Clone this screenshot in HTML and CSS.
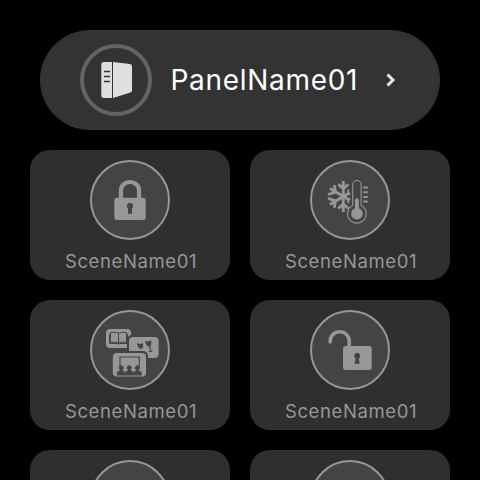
FILE: index.html
```html
<!DOCTYPE html>
<html lang="en">
<head>
<meta charset="utf-8">
<title>Scenes</title>
<link rel="stylesheet" href="styles.css">
</head>
<body>
<main class="screen">
  <header class="panel">
    <svg class="panel-icon" viewBox="0 0 72 72">
      <circle cx="36" cy="36" r="34" fill="none" stroke="#646464" stroke-width="4"/>
      <path class="door" d="M24 18h8v36h-8q-2.700 0-2.700-2.700v-30.600q0-2.700 2.700-2.700z"/>
      <path class="door" d="M33 18l17 2q2 .3 2 2v24.500q0 1.500-1.500 2L33 54z"/>
      <path d="M24 27.500h6M24 32.500h6M24 37.500h6" stroke="#333" stroke-width="1.300"/>
    </svg>
    <span class="panel-name">PanelName01</span>
    <svg class="chevron" viewBox="0 0 10 14"><path d="M1.500 1.500L7 7l-5.500 5.500"/></svg>
  </header>
  <section class="grid">
    <article class="scene">
      <svg class="scene-icon" viewBox="0 0 80 80">
        <circle class="ring" cx="40" cy="40" r="39"/>
        <path class="line" stroke-width="4.200" d="M31 39V30a9 8 0 0 1 18 0v9"/>
        <rect class="fill" x="24.300" y="37.700" width="31.400" height="22.300" rx="2.500"/>
        <path class="hole" d="M40 42.700a3.200 3.200 0 0 1 2 5.700v5.300h-4v-5.300a3.200 3.200 0 0 1 2-5.700z"/>
      </svg>
      <span class="scene-name">SceneName01</span>
    </article>
    <article class="scene">
      <svg class="scene-icon" viewBox="0 0 80 80">
        <circle class="ring" cx="40" cy="40" r="39"/>
        <path class="line" stroke-width="2.800" d="M33.300 21v31M20 28.500l19.500 11.500M20 44.500l19.500-11.800M28.300 24.300l5 4.500 5-4.500M28.300 48.500l5-4.500 5 4.500M18 34.500l7.500-2.300-1.200-7M18 38.300l7.500 2.500-1.200 7"/>
        <path class="line" stroke-width="2" d="M38.200 29.500v4l2.200.5M38.200 43v-3.500l2-.5"/>
        <path class="outline" d="M42.700 45.500V25a4.200 4.500 0 0 1 8.400 0v20.500a9.300 9.300 0 1 1-8.400 0z"/>
        <circle class="fill" cx="46.900" cy="53.700" r="5.800"/>
        <path class="line" stroke-width="4" stroke-linecap="round" d="M46.900 40.300v12"/>
        <path class="line" stroke-width="2" d="M53.300 27.500h4.500M53.300 32.200h4.500M53.300 36.900h4.500M53.300 41.500h4.500"/>
      </svg>
      <span class="scene-name">SceneName01</span>
    </article>
    <article class="scene">
      <svg class="scene-icon" viewBox="0 0 80 80">
        <circle class="ring" cx="40" cy="40" r="39"/>
        <rect class="fill" x="16" y="19" width="25" height="19" rx="4"/>
        <path class="book" d="M20.500 22.500q5-1 8 .8 3-1.800 8-.8v10q-5-1-8 .5-3-1.500-8-.5zM28.500 23v10M19.500 24v9.500h7.500l1.500.6 1.500-.6h7.500V24"/>
        <rect class="cut" x="37" y="25" width="33.500" height="25" rx="5"/>
        <rect class="fill" x="39" y="27" width="29.600" height="21" rx="4"/>
        <path class="hole" d="M47.200 33l2.500 1 3.300-.5c.5 3-.3 5.400-2 5.500-2.200-.5-4-3-3.800-6zM55 31l3 .5 3-1.500c.8 3.500.2 6.500-1.600 7-2.400-.7-4.200-3-4.400-6z"/>
        <path d="M60 36.500l.5 4.500M58.500 41.600l4-.6" class="detail"/>
        <rect class="cut" x="21" y="41" width="37" height="27" rx="5"/>
        <rect class="fill" x="22.800" y="43" width="33.200" height="23.400" rx="4"/>
        <path class="detail" d="M30 56V47h19.300v9"/>
        <path class="hole" d="M26.800 65.500v-2q0-2.500 2.500-2.800 .7 0 .7-.7a2.500 2.500 0 1 1 2.400 0q0 .7 .7 .7 2 .3 2 2.800 0-2.500 2-2.800 1 0 1-.7a2.500 2.500 0 1 1 2.400 0q0 .7 1 .7 2 .3 2 2.800 0-2.500 2-2.800 .7 0 .7-.7a2.500 2.500 0 1 1 2.400 0q0 .7 .7 .7 2.500 .3 2.500 2.800v2z"/>
      </svg>
      <span class="scene-name">SceneName01</span>
    </article>
    <article class="scene">
      <svg class="scene-icon" viewBox="0 0 80 80">
        <circle class="ring" cx="40" cy="40" r="39"/>
        <path class="line" stroke-width="3.600" stroke-linecap="round" d="M20.200 32v-1a9.500 9.200 0 0 1 19 0v8"/>
        <rect class="fill" x="33" y="36" width="28.700" height="24" rx="2.500"/>
        <path class="hole" d="M47.200 42.700a3.300 3.300 0 0 1 1.600 6.100l1 5h-5.200l1-5a3.300 3.300 0 0 1 1.600-6.100z"/>
      </svg>
      <span class="scene-name">SceneName01</span>
    </article>
    <article class="scene">
      <svg class="scene-icon" viewBox="0 0 80 80"><circle class="ring" cx="40" cy="40" r="39"/></svg>
    </article>
    <article class="scene">
      <svg class="scene-icon" viewBox="0 0 80 80"><circle class="ring" cx="40" cy="40" r="39"/></svg>
    </article>
  </section>
</main>
</body>
</html>
```
FILE: styles.css
```css
* { box-sizing: border-box; }
body { margin: 0; background: #000; font-family: Inter, "Liberation Sans", sans-serif; }
.screen { width: 480px; height: 480px; overflow: hidden; padding: 30px 30px 0; }
.panel { display: flex; align-items: center; height: 100px; margin: 0 10px 20px; padding-left: 40px; border-radius: 50px; background: #333; }
.panel-icon { width: 72px; height: 72px; flex: none; }
.door { fill: #dedede; }
.panel-name { width: 187px; margin-left: 18.5px; color: #fff; font-size: 28px; line-height: 36px; letter-spacing: 0.7px; white-space: nowrap; }
.chevron { width: 10px; height: 14px; margin-left: 28px; fill: none; stroke: #e4e4e4; stroke-width: 3; }
.grid { display: grid; grid-template-columns: 200px 200px; grid-auto-rows: 130px; gap: 20px; }
.scene { display: flex; flex-direction: column; align-items: center; padding-top: 10px; border-radius: 20px; background: #2f2f2f; }
.scene-icon { width: 80px; height: 80px; flex: none; }
.scene-name { margin-top: 9px; color: #979797; font-size: 18.5px; line-height: 24px; letter-spacing: 0.6px; margin-left: 2px; white-space: nowrap; }
.ring { fill: #444; stroke: #979797; stroke-width: 2; }
.fill { fill: #979797; }
.line { fill: none; stroke: #979797; }
.hole, .cut { fill: #444; }
.outline { fill: #444; stroke: #979797; stroke-width: 1.1; }
.book { fill: none; stroke: #444; stroke-width: 1; }
.detail { fill: none; stroke: #444; stroke-width: 1.2; }
```
